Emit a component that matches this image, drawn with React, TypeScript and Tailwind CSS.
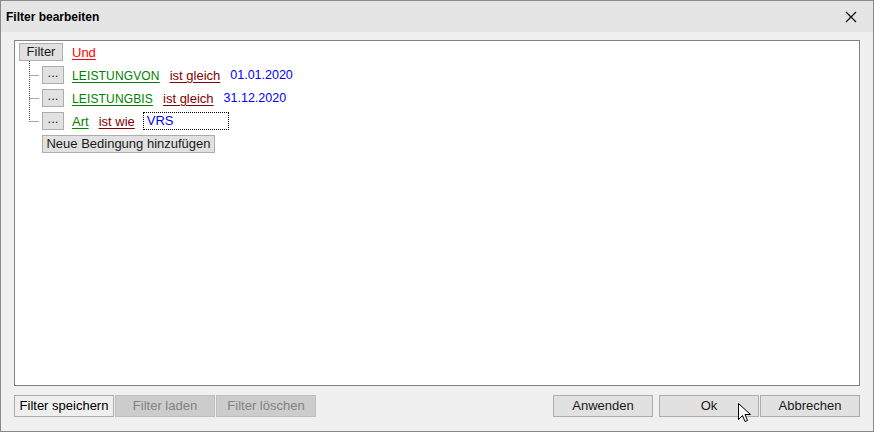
export default function App() {
  const font = { fontFamily: '"Liberation Sans", Arial, sans-serif' };

  const btn =
    'h-[18px] border border-[#adadad] bg-[#e1e1e1] text-[13px] leading-[16px] text-[#1a1a1a] flex items-center justify-center';

  return (
    <div className="w-[874px] h-[432px] bg-[#f0f0f0] border border-[#8a8a8a] flex flex-col text-[13px]" style={font}>
      {/* Title bar */}
      <div className="h-[31px] bg-[#e5e5e5] flex items-center justify-between pl-[5px] pr-[16px] shrink-0">
        <span className="font-bold text-[12px] text-black">Filter bearbeiten</span>
        <svg width="12" height="12" viewBox="0 0 12 12" className="mt-[1px]">
          <path d="M1 1 L11 11 M11 1 L1 11" stroke="#111" strokeWidth="1.3" />
        </svg>
      </div>

      {/* Body */}
      <div className="flex-1 flex flex-col px-[13px] pt-[8px] pb-[13px]">
        {/* Tree panel */}
        <div className="h-[346px] bg-white border border-[#828282] pl-[4px] pt-[2px]">
          <div className="flex items-center h-[18px]">
            <div className={`${btn} w-[44px]`}>Filter</div>
            <span className="ml-[9px] mt-[1px] text-[#ff0000] underline underline-offset-2">Und</span>
          </div>

          <div className="relative pl-[23px] pt-[5px]">
            <svg className="absolute left-0 top-0" width="24" height="70">
              <path
                d="M10.5 0 V60.5 M10.5 14.5 H20 M10.5 37.5 H20 M10.5 60.5 H20"
                stroke="#555"
                strokeWidth="1"
                strokeDasharray="1 1"
                fill="none"
              />
            </svg>

            <div className="flex flex-col gap-[5px]">
              <div className="flex items-center h-[18px]">
                <div className={`${btn} w-[22px] pb-[4px]`}>...</div>
                <span className="ml-[8px] mt-[1px] text-[12px] tracking-[0.15px] text-[#008000] underline underline-offset-2">LEISTUNGVON</span>
                <span className="ml-[10px] mt-[1px] text-[#800000] underline underline-offset-2">ist gleich</span>
                <span className="ml-[10px] mt-[1px] text-[12.5px] text-[#0000ff]">01.01.2020</span>
              </div>
              <div className="flex items-center h-[18px]">
                <div className={`${btn} w-[22px] pb-[4px]`}>...</div>
                <span className="ml-[8px] mt-[1px] text-[12px] tracking-[0.15px] text-[#008000] underline underline-offset-2">LEISTUNGBIS</span>
                <span className="ml-[10px] mt-[1px] text-[#800000] underline underline-offset-2">ist gleich</span>
                <span className="ml-[10px] mt-[1px] text-[12.5px] text-[#0000ff]">31.12.2020</span>
              </div>
              <div className="flex items-center h-[18px]">
                <div className={`${btn} w-[22px] pb-[4px]`}>...</div>
                <span className="ml-[8px] mt-[1px] text-[#008000] underline underline-offset-2">Art</span>
                <span className="ml-[10px] mt-[1px] text-[#800000] underline underline-offset-2">ist wie</span>
                <div className="ml-[8px] w-[86px] h-[18px] border border-dotted border-black text-[#0000ff] pl-[3px] leading-[16px]">
                  VRS
                </div>
              </div>
              <div className="flex items-center h-[18px]">
                <div className={`${btn} w-[173px]`}>Neue Bedingung hinzufügen</div>
              </div>
            </div>
          </div>
        </div>

        {/* Buttons */}
        <div className="mt-[9px] flex items-center h-[22px]">
          <div className="flex gap-[1px]">
            <div className="w-[100px] h-[22px] border border-[#adadad] bg-[#efefef] text-black flex items-center justify-center">
              Filter speichern
            </div>
            <div className="w-[100px] h-[22px] border border-[#bfbfbf] bg-[#cccccc] text-[#838383] flex items-center justify-center">
              Filter laden
            </div>
            <div className="w-[100px] h-[22px] border border-[#bfbfbf] bg-[#cccccc] text-[#838383] flex items-center justify-center">
              Filter löschen
            </div>
          </div>
          <div className="ml-auto flex">
            <div className="w-[100px] h-[22px] border border-[#adadad] bg-[#e1e1e1] text-[#1a1a1a] flex items-center justify-center">
              Anwenden
            </div>
            <div className="relative ml-[6px] w-[100px] h-[22px] border border-[#adadad] bg-[#e1e1e1] text-[#1a1a1a] flex items-center justify-center">
              Ok
              <svg className="absolute left-[78px] top-[7px]" width="14" height="21" viewBox="0 0 14 21">
                <path
                  d="M0.5 0.5 V16.5 L4.5 12.5 L7 18.5 L9.5 17.5 L7 11.5 L12.5 11.5 Z"
                  fill="#fff"
                  stroke="#000"
                  strokeWidth="1"
                  strokeLinejoin="miter"
                />
              </svg>
            </div>
            <div className="ml-[1px] w-[100px] h-[22px] border border-[#adadad] bg-[#e1e1e1] text-[#1a1a1a] flex items-center justify-center">
              Abbrechen
            </div>
          </div>
        </div>
      </div>
    </div>
  );
}
